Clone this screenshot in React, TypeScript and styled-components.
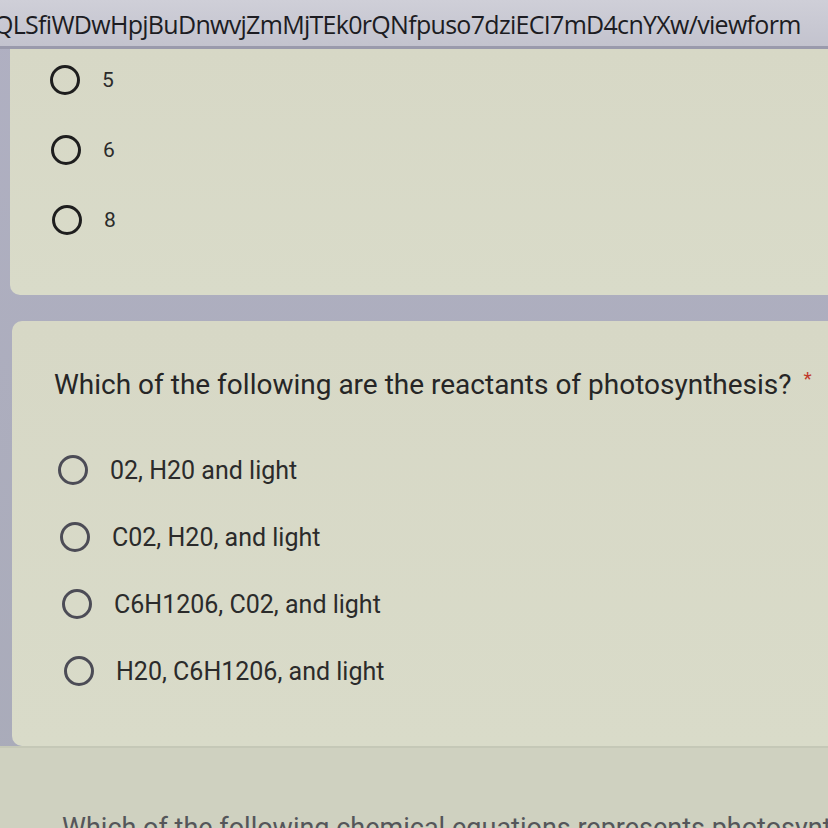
import React from "react";
import styled, { createGlobalStyle } from "styled-components";

const GlobalStyle = createGlobalStyle`
  html, body {
    margin: 0;
    padding: 0;
    background: #acadbd;
  }
`;

const Page = styled.div`
  width: 828px;
  height: 828px;
  overflow: hidden;
  background: linear-gradient(180deg, #b0b0c2 0%, #a9abb9 100%);
  display: flex;
  flex-direction: column;
  font-family: Roboto, "Liberation Sans", Arial, sans-serif;
`;

const AddressBar = styled.div`
  height: 46px;
  flex: none;
  background: linear-gradient(180deg, #cfcfd8 0%, #c3c3ce 100%);
  border-bottom: 3px solid #9a9aac;
  display: flex;
  align-items: center;
  overflow: hidden;
  white-space: nowrap;
`;

const Url = styled.span`
  font-family: "Open Sans", "Liberation Sans", sans-serif;
  font-size: 25px;
  letter-spacing: -0.7px;
  color: #1c1c22;
  margin-left: -6px;
  margin-top: 2px;
`;

const Stack = styled.div`
  display: flex;
  flex-direction: column;
  gap: 26px;
  margin-right: -30px;
`;

const Card = styled.section<{ $inset: number; $top: boolean }>`
  margin-left: ${(p) => p.$inset}px;
  background: linear-gradient(180deg, #d7d8c6 0%, #d9dbc9 100%);
  border-radius: ${(p) => (p.$top ? "10px" : "0")} 0 0 10px;
  display: flex;
  flex-direction: column;
`;

const OptionList = styled.div<{ $pad: number; $gap: number; $top: number; $bottom: number }>`
  display: flex;
  flex-direction: column;
  gap: ${(p) => p.$gap}px;
  padding: ${(p) => p.$top}px 0 ${(p) => p.$bottom}px ${(p) => p.$pad}px;
`;

const Option = styled.label<{ $shift: number }>`
  display: flex;
  align-items: center;
  height: 30px;
  gap: 22px;
  margin-left: ${(p) => p.$shift}px;
`;

const Radio = styled.span<{ $color: string }>`
  width: 24px;
  height: 24px;
  border-radius: 50%;
  border: 3px solid ${(p) => p.$color};
  flex: none;
`;

const OptionText = styled.span<{ $size: number }>`
  font-size: ${(p) => p.$size}px;
  color: #2b2b2b;
`;

const Question = styled.h2`
  margin: 0;
  padding: 46px 0 0 42px;
  font-size: 28px;
  font-weight: 400;
  color: #262626;
  white-space: nowrap;
`;

const Required = styled.span`
  color: #c0392b;
  font-size: 19px;
  margin-left: 12px;
  vertical-align: 9px;
`;

const LastCard = styled.section`
  flex: 1;
  background: #cfd1c0;
  border-top: 2px solid #c5c8b7;
  overflow: hidden;
`;

const NextQuestion = styled.h2`
  margin: 0;
  padding: 64px 0 0 62px;
  font-size: 27px;
  font-weight: 400;
  color: #55565a;
  white-space: nowrap;
`;

const firstOptions = ["5", "6", "8"];
const reactantOptions = [
  "02, H20 and light",
  "C02, H20, and light",
  "C6H1206, C02, and light",
  "H20, C6H1206, and light",
];

export default function App() {
  return (
    <Page>
      <GlobalStyle />
      <AddressBar>
        <Url>QLSfiWDwHpjBuDnwvjZmMjTEk0rQNfpuso7dziECI7mD4cnYXw/viewform</Url>
      </AddressBar>
      <Stack>
        <Card $inset={10} $top={false} style={{ height: 246 }}>
          <OptionList $pad={40} $gap={40} $top={16} $bottom={0}>
            {firstOptions.map((o, i) => (
              <Option key={o} $shift={i}>
                <Radio $color="#1e1e1e" />
                <OptionText $size={21}>{o}</OptionText>
              </Option>
            ))}
          </OptionList>
        </Card>
        <Card $inset={12} $top={true}>
          <Question>
            Which of the following are the reactants of photosynthesis?
            <Required>*</Required>
          </Question>
          <OptionList $pad={46} $gap={37} $top={54} $bottom={60}>
            {reactantOptions.map((o, i) => (
              <Option key={o} $shift={i * 2}>
                <Radio $color="#4c4c56" />
                <OptionText $size={25}>{o}</OptionText>
              </Option>
            ))}
          </OptionList>
        </Card>
      </Stack>
      <LastCard>
        <NextQuestion>
          Which of the following chemical equations represents photosynthesis?
        </NextQuestion>
      </LastCard>
    </Page>
  );
}
